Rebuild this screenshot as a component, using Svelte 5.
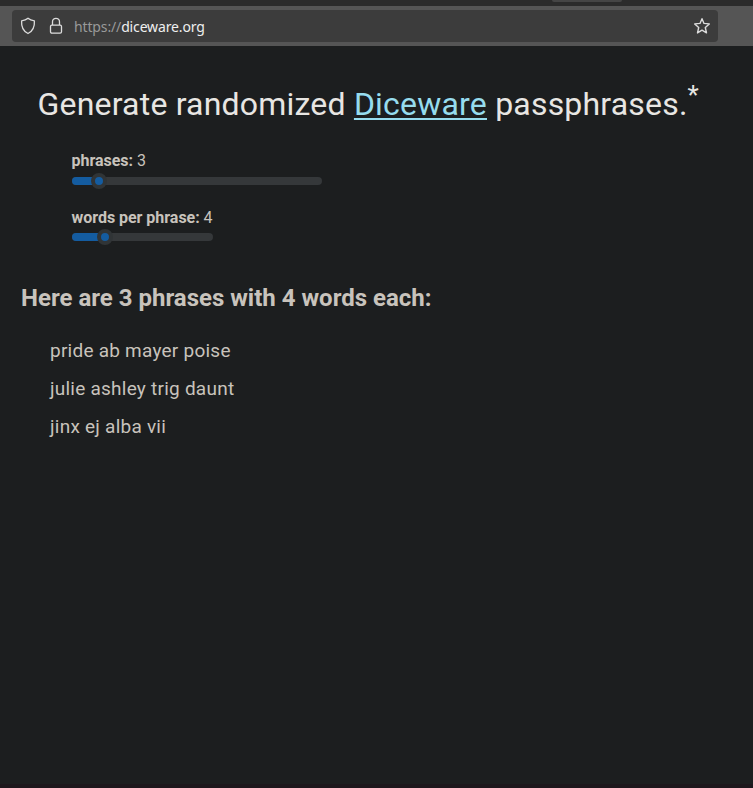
<script>
  let phraseCount = $state(3);
  let wordCount = $state(4);
  const phrases = ['pride ab mayer poise', 'julie ashley trig daunt', 'jinx ej alba vii'];
</script>

{#snippet slider(label, value, width, fill)}
  <div class="slider" role="slider" tabindex="-1" aria-label={label} aria-valuenow={value} style="width: {width}px">
    <div class="fill" style="width: {fill}px"></div>
    <div class="thumb" style="left: {fill - 8}px"></div>
  </div>
{/snippet}

<div class="window">
  <div class="tabs"><div class="tab"></div></div>
  <div class="toolbar">
    <div class="address">
      <svg class="shield" width="16" height="18" viewBox="0 0 16 18" fill="none" stroke="#dcdcdc" stroke-width="1.3" stroke-linejoin="round">
        <path d="M8 1.300c1.500 1.400 3.800 2.300 6.400 2.500C14.800 10 12.800 14.300 8 16.500C3.200 14.300 1.200 10 1.600 3.800C4.200 3.600 6.500 2.700 8 1.300Z" />
      </svg>
      <svg class="lock" width="14" height="18" viewBox="0 0 14 18" fill="none" stroke="#dcdcdc" stroke-width="1.3">
        <path d="M3.500 8V4.800a3.500 3.500 0 0 1 7 0V8" />
        <rect x="1.500" y="8.100" width="11" height="8" rx="1.400" />
      </svg>
      <span class="url"><span class="scheme">https://</span>diceware.org</span>
      <svg class="star" width="18" height="18" viewBox="0 0 18 18" fill="none" stroke="#dcdcdc" stroke-width="1.4" stroke-linejoin="round">
        <path d="M9 1.700l2 4.700 5.300.5-4 3.600 1.200 5.400L9 13.200l-4.500 2.700 1.200-5.400-4-3.600L7 6.400Z" />
      </svg>
    </div>
  </div>
  <main>
    <h1>Generate randomized <a href="#diceware">Diceware</a> passphrases.<sup>*</sup></h1>
    <section class="controls">
      <div class="control">
        <div class="label"><b>phrases:</b> {phraseCount}</div>
        {@render slider('phrases', phraseCount, 250, 27)}
      </div>
      <div class="control second">
        <div class="label"><b>words per phrase:</b> {wordCount}</div>
        {@render slider('words per phrase', wordCount, 141, 33)}
      </div>
    </section>
    <h2>Here are {phraseCount} phrases with {wordCount} words each:</h2>
    <ul>
      {#each phrases as phrase}
        <li>{phrase}</li>
      {/each}
    </ul>
  </main>
  <div class="edge"></div>
</div>

<style>
  .window {
    width: 753px;
    height: 788px;
    display: flex;
    flex-direction: column;
    overflow: hidden;
    background: #1c1e1f;
    color: #c8c3bc;
    font-family: Roboto, sans-serif;
  }
  .tabs {
    height: 6px;
    flex: none;
    background: #2b2b2b;
    display: flex;
    justify-content: flex-end;
  }
  .tab {
    width: 70px;
    height: 2px;
    margin-right: 131px;
    background: #454545;
    border-radius: 0 0 3px 3px;
  }
  .toolbar {
    height: 40px;
    box-sizing: border-box;
    flex: none;
    padding: 4px 35px 4px 12px;
    background: #555;
  }
  .address {
    height: 32px;
    display: flex;
    align-items: center;
    background: #3c3c3c;
    border-radius: 4px;
  }
  svg {
    display: block;
    flex: none;
  }
  .shield {
    margin-left: 8px;
  }
  .lock {
    margin-left: 13px;
  }
  .url {
    flex: 1;
    margin: 2px 0 0 11px;
    font: 14px/20px "Noto Sans", sans-serif;
    letter-spacing: -0.14px;
    color: #efefef;
    white-space: nowrap;
  }
  .scheme {
    color: #999;
  }
  .star {
    margin-right: 7px;
  }
  main {
    flex: 1;
  }
  h1 {
    margin: 36px 0 0 37.5px;
    font-size: 32px;
    line-height: 44px;
    font-weight: 400;
    letter-spacing: 0.2px;
    color: #e8e6e3;
    white-space: nowrap;
  }
  h1 a {
    color: #96dcee;
    text-decoration: underline;
    text-decoration-thickness: 2px;
    text-underline-offset: 3px;
  }
  sup {
    font-size: 26px;
    line-height: 0;
    vertical-align: 11px;
  }
  .controls {
    padding: 25px 0 0 72px;
    display: flex;
    flex-direction: column;
    gap: 17px;
  }
  .control {
    display: flex;
    flex-direction: column;
    gap: 6px;
  }
  .second {
    padding-top: 1px;
    gap: 5px;
  }
  .label {
    margin-left: -0.5px;
    font-size: 16px;
    line-height: 20px;
    height: 20px;
    letter-spacing: -0.03px;
  }
  .label b {
    font-weight: 700;
  }
  .slider {
    position: relative;
    height: 8px;
    margin-bottom: 5px;
    border-radius: 4px;
    background: #35383a;
  }
  .fill {
    height: 8px;
    border-radius: 4px 0 0 4px;
    background: #145ca0;
  }
  .thumb {
    position: absolute;
    top: -4px;
    box-sizing: border-box;
    width: 16px;
    height: 16px;
    border: 4px solid #303436;
    border-radius: 50%;
    background: #145ca0;
  }
  h2 {
    margin: 36px 0 0 21px;
    font-size: 24px;
    line-height: 32px;
    font-weight: 700;
    white-space: nowrap;
  }
  ul {
    list-style: none;
    margin: 18px 0 0 50px;
    padding: 0;
  }
  li {
    font-size: 19px;
    line-height: 38px;
    letter-spacing: 0.24px;
  }
  .edge {
    height: 4px;
    flex: none;
    background: #1d171c;
  }
</style>
